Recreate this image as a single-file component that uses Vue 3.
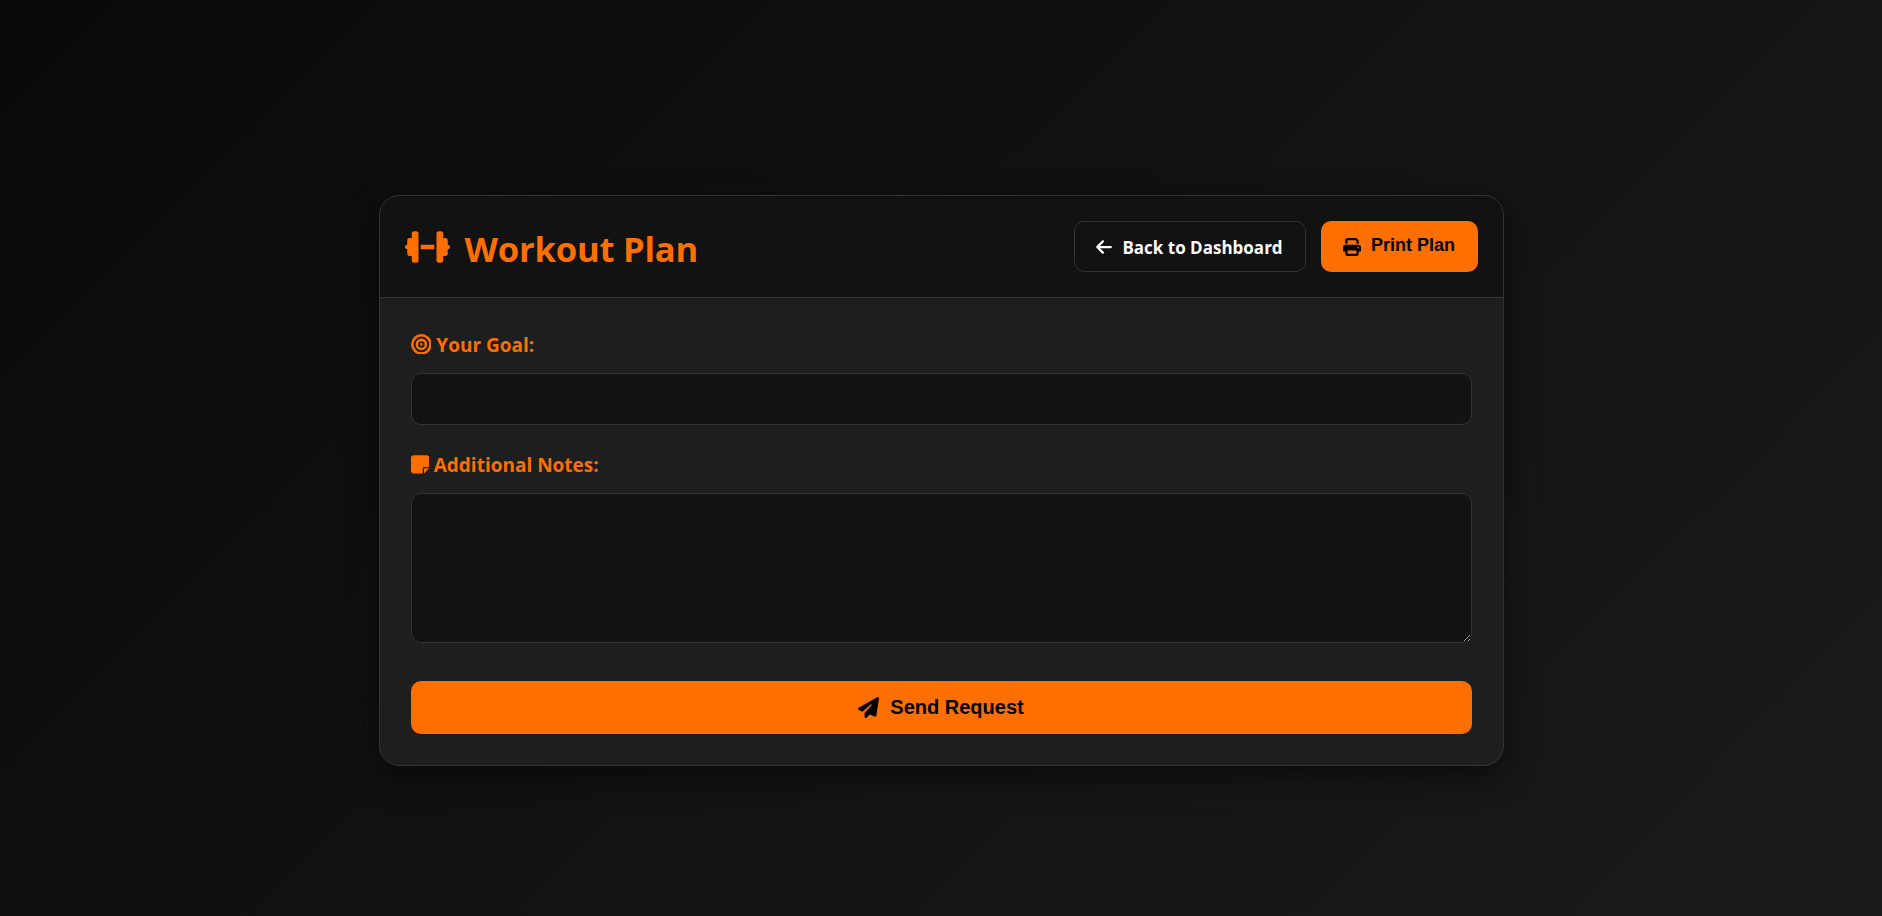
<template>
  <div class="page">
    <div class="card">
      <header class="card-header">
        <h1 class="title">
          <svg class="title-icon" viewBox="0 0 640 512"><path d="M96 64c0-17.7 14.3-32 32-32h32c17.7 0 32 14.3 32 32V224v64V448c0 17.7-14.3 32-32 32H128c-17.7 0-32-14.3-32-32V384H64c-17.7 0-32-14.3-32-32V288c-17.7 0-32-14.3-32-32s14.3-32 32-32V160c0-17.7 14.3-32 32-32H96V64zm448 0v64h32c17.7 0 32 14.3 32 32v64c17.7 0 32 14.3 32 32s-14.3 32-32 32v64c0 17.7-14.3 32-32 32H544v64c0 17.7-14.3 32-32 32H480c-17.7 0-32-14.3-32-32V288 224 64c0-17.7 14.3-32 32-32h32c17.7 0 32 14.3 32 32zM416 224v64H224V224H416z"/></svg>
          Workout Plan
        </h1>
        <div class="actions">
          <button class="btn btn-back">
            <svg class="btn-icon back-icon" viewBox="0 0 448 512"><path d="M9.4 233.4c-12.5 12.5-12.5 32.8 0 45.3l160 160c12.5 12.5 32.8 12.5 45.3 0s12.5-32.8 0-45.3L109.2 288 416 288c17.7 0 32-14.3 32-32s-14.3-32-32-32l-306.7 0L214.6 118.6c12.5-12.5 12.5-32.8 0-45.3s-32.8-12.5-45.3 0l-160 160z"/></svg>
            <span>Back to Dashboard</span>
          </button>
          <button class="btn btn-print">
            <svg class="btn-icon" viewBox="0 0 512 512"><path d="M128 0C92.7 0 64 28.7 64 64v96h64V64H354.7L384 93.3V160h64V93.3c0-17-6.7-33.3-18.7-45.3L400 18.7C388 6.7 371.7 0 354.7 0H128zM384 352v32 64H128V384 368 352H384zm64 32h32c17.7 0 32-14.3 32-32V256c0-35.3-28.7-64-64-64H64c-35.3 0-64 28.7-64 64v96c0 17.7 14.3 32 32 32H64v64c0 35.3 28.7 64 64 64H384c35.3 0 64-28.7 64-64V384zM432 248a24 24 0 1 1 0 48 24 24 0 1 1 0-48z"/></svg>
            <span class="print-text">Print Plan</span>
          </button>
        </div>
      </header>

      <form class="card-body" @submit.prevent>
        <label class="field-label" for="goal">
          <svg class="label-icon goal-icon" viewBox="0 0 512 512"><path d="M448 256A192 192 0 1 0 64 256a192 192 0 1 0 384 0zM0 256a256 256 0 1 1 512 0A256 256 0 1 1 0 256zm256 80a80 80 0 1 0 0-160 80 80 0 1 0 0 160zm0-224a144 144 0 1 1 0 288 144 144 0 1 1 0-288zM224 256a32 32 0 1 1 64 0 32 32 0 1 1 -64 0z"/></svg>
          <span class="label-text">Your Goal:</span>
        </label>
        <input id="goal" v-model="goal" class="field field-input" type="text" />

        <label class="field-label notes-label" for="notes">
          <svg class="label-icon note-icon" viewBox="0 0 448 512"><path d="M64 32C28.7 32 0 60.7 0 96V416c0 35.3 28.7 64 64 64H288V368c0-26.5 21.5-48 48-48H448V96c0-35.3-28.7-64-64-64H64zM448 352H402.7 336c-8.8 0-16 7.2-16 16v66.7V480l32-32 64-64 32-32z"/></svg>
          <span class="label-text">Additional Notes:</span>
        </label>
        <textarea id="notes" v-model="notes" class="field field-area"></textarea>

        <button class="send" type="submit">
          <svg class="send-icon" viewBox="0 0 512 512"><path d="M498.1 5.6c10.1 7 15.4 19.1 13.5 31.2l-64 416c-1.5 9.7-7.4 18.2-16 23s-18.9 5.4-28 1.6L284 427.7l-68.5 74.1c-8.9 9.7-22.9 12.9-35.2 8.1S160 493.2 160 480V396.4c0-4 1.5-7.8 4.2-10.7L331.8 202.8c5.8-6.3 5.6-16-.4-22s-15.7-6.4-22-.7L106 360.8 17.7 316.6C7.1 311.3 .3 300.7 0 288.9s5.9-22.8 16.1-28.7l448-256c10.7-6.1 23.9-5.5 34 1.4z"/></svg>
          Send Request
        </button>
      </form>
    </div>
  </div>
</template>

<script setup>
import { ref } from 'vue'

const goal = ref('')
const notes = ref('')
</script>

<style>
body {
  margin: 0;
}
</style>

<style scoped>
.page {
  box-sizing: border-box;
  height: 916px;
  padding-top: 195px;
  display: flex;
  justify-content: center;
  align-items: flex-start;
  background: linear-gradient(135deg, #0a0a0a, #1a1a1a);
  font-family: "Open Sans", "Noto Sans", sans-serif;
}

.card {
  width: 1125px;
  box-sizing: border-box;
  background: #1e1e1e;
  border: 1px solid #333;
  border-radius: 20px;
  overflow: hidden;
  box-shadow: 0 10px 30px rgba(0, 0, 0, 0.5);
}

.card-header {
  height: 102px;
  box-sizing: border-box;
  padding: 25px;
  display: flex;
  justify-content: space-between;
  background: #121212;
  border-bottom: 1px solid #333;
}

.title {
  margin: 0;
  display: flex;
  align-items: center;
  gap: 15px;
  color: #ff6f00;
  font-size: 34.6px;
  font-weight: 700;
  letter-spacing: -0.2px;
  padding-top: 3px;
}

.title-icon {
  width: 45px;
  height: 36px;
  fill: #ff6f00;
  margin-top: -3px;
}

.actions {
  display: flex;
  gap: 15px;
}

.btn {
  box-sizing: border-box;
  height: 51px;
  display: flex;
  align-items: center;
  gap: 10px;
  border-radius: 10px;
  font-weight: 700;
  font-family: "Liberation Sans", Arial, sans-serif;
}

.btn-back {
  width: 232px;
  justify-content: center;
  padding-top: 2px;
  background: #121212;
  border: 1px solid #333;
  color: #fff;
  font-family: "Open Sans", "Noto Sans", sans-serif;
  font-size: 17px;
}

.btn-print {
  width: 157px;
  justify-content: center;
  background: #ff6f00;
  border: none;
  color: #000;
  font-size: 18px;
}

.print-text {
  margin-top: -2px;
}

.btn-icon {
  width: 18px;
  height: 18px;
  fill: currentColor;
}

.back-icon {
  width: 16px;
}

.card-body {
  padding: 33px 31px 31px;
  display: flex;
  flex-direction: column;
}

.field-label {
  display: flex;
  align-items: center;
  gap: 5px;
  color: #ff6f00;
  font-size: 19px;
  font-weight: 700;
  height: 26px;
  margin-bottom: 16px;
}

.label-text {
  margin-top: 2px;
}

.notes-label {
  margin-top: 26px;
  margin-bottom: 16px;
}

.label-icon {
  height: 20.8px;
  fill: #ff6f00;
}

.goal-icon {
  width: 20.8px;
}

.note-icon {
  width: 18.2px;
}

.field {
  display: block;
  box-sizing: border-box;
  width: 100%;
  background: #121212;
  border: 1px solid #333;
  border-radius: 10px;
  color: #fff;
  outline: none;
}

.field-input {
  height: 52px;
}

.field-area {
  height: 150px;
  resize: vertical;
}

.send {
  margin-top: 38px;
  height: 53px;
  display: flex;
  align-items: center;
  justify-content: center;
  gap: 11px;
  background: #ff6f00;
  border: none;
  border-radius: 10px;
  color: #000;
  font-family: "Liberation Sans", Arial, sans-serif;
  font-size: 20px;
  font-weight: 700;
}

.send-icon {
  width: 21px;
  height: 21px;
  fill: #000;
}
</style>
